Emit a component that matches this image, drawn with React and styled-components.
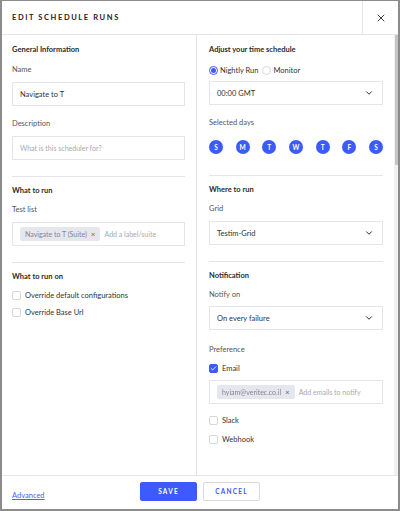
import React from "react";
import styled, { createGlobalStyle } from "styled-components";
import { X, ChevronDown, Check } from "lucide-react";

const GlobalStyle = createGlobalStyle`
  html, body {
    margin: 0;
    padding: 0;
    background: #fff;
  }
  * {
    box-sizing: border-box;
  }
`;

const BLUE = "#3d5afe";
const LINE = "#e4e4ea";

const Modal = styled.div`
  width: 400px;
  height: 511px;
  display: flex;
  flex-direction: column;
  border: 2px solid #8c8c8c;
  border-top-width: 1px;
  background: #fff;
  font-family: Lato, "Open Sans", sans-serif;
  color: #333;
  overflow: hidden;
`;

const Header = styled.div`
  height: 34px;
  flex: none;
  display: flex;
  align-items: center;
  border-bottom: 1px solid ${LINE};
`;

const Title = styled.div`
  flex: 1;
  padding-left: 10px;
  font-size: 7.5px;
  font-weight: 700;
  letter-spacing: 1.6px;
  color: #222;
`;

const CloseButton = styled.div`
  width: 36px;
  height: 100%;
  display: flex;
  align-items: center;
  justify-content: center;
  border-left: 1px solid ${LINE};
  color: #222;
`;

const Body = styled.div`
  flex: 1;
  display: flex;
  min-height: 0;
`;

const Columns = styled.div`
  flex: 1;
  display: grid;
  grid-template-columns: 195px 1fr;
`;

const Column = styled.div`
  padding: 0 11px 0 ${(p) => p.$left}px;
  border-right: ${(p) => (p.$divider ? `1px solid ${LINE}` : "none")};
`;

const ScrollTrack = styled.div`
  width: 4px;
  flex: none;
  background: #f1f1f1;
`;

const ScrollThumb = styled.div`
  width: 3px;
  height: 130px;
  margin-left: 1px;
  background: #c4c4c4;
`;

const Section = styled.div`
  padding: ${(p) => p.$top ?? 9}px 0 ${(p) => p.$bottom ?? 16}px;
  border-bottom: ${(p) => (p.$last ? "none" : `1px solid ${LINE}`)};
`;

const SectionTitle = styled.div`
  font-size: 7.5px;
  line-height: 12px;
  font-weight: 700;
  color: #2b2b2b;
`;

const Label = styled.div`
  font-size: 7.5px;
  line-height: 12px;
  color: #555;
  margin-top: ${(p) => p.$mt ?? 8}px;
`;

const Input = styled.div`
  margin-top: ${(p) => p.$mt ?? 6}px;
  height: 24px;
  border: 1px solid ${LINE};
  display: flex;
  align-items: center;
  gap: 4px;
  padding: 0 7px;
  font-size: 7.5px;
  color: #333;
`;

const Select = styled(Input)`
  justify-content: space-between;
  padding-right: 8px;
`;

const Placeholder = styled.span`
  color: #a8a8b0;
  font-size: 7px;
`;

const Chip = styled.span`
  height: 14px;
  display: inline-flex;
  align-items: center;
  gap: 4px;
  padding: 0 5px;
  border-radius: 2px;
  background: #e6e6ef;
  color: #858590;
  font-size: 7px;
`;

const ChipText = styled.span`
  filter: ${(p) => (p.$blur ? "blur(0.5px)" : "none")};
`;

const ChipClose = styled.span`
  font-size: 8px;
  color: #666;
`;

const CheckRow = styled.label`
  display: flex;
  align-items: center;
  gap: 4px;
  height: 12px;
  margin-top: ${(p) => p.$mt ?? 5}px;
  font-size: 7.5px;
  color: #333;
`;

const Box = styled.span`
  width: 9px;
  height: 9px;
  border-radius: 2px;
  border: 1px solid ${(p) => (p.$checked ? BLUE : "#d6d6dc")};
  background: ${(p) => (p.$checked ? BLUE : "#fff")};
  display: flex;
  align-items: center;
  justify-content: center;
  color: #fff;
`;

const RadioRow = styled.div`
  display: flex;
  align-items: center;
  height: 12px;
  margin-top: 8px;
  font-size: 7.5px;
  color: #333;
`;

const RadioOption = styled.span`
  display: flex;
  align-items: center;
  gap: 2px;
  margin-right: 4px;
`;

const RadioDot = styled.span`
  width: 9px;
  height: 9px;
  border-radius: 50%;
  border: 1px solid ${(p) => (p.$checked ? BLUE : "#d6d6dc")};
  display: flex;
  align-items: center;
  justify-content: center;

  &::after {
    content: "";
    width: 5px;
    height: 5px;
    border-radius: 50%;
    background: ${(p) => (p.$checked ? BLUE : "transparent")};
  }
`;

const Days = styled.div`
  display: flex;
  justify-content: space-between;
  margin-top: 11px;
`;

const Day = styled.span`
  width: 14px;
  height: 14px;
  border-radius: 50%;
  background: ${BLUE};
  color: #fff;
  font-size: 6.5px;
  font-weight: 700;
  display: flex;
  align-items: center;
  justify-content: center;
`;

const Footer = styled.div`
  height: 34px;
  flex: none;
  border-top: 1px solid ${LINE};
  display: grid;
  grid-template-columns: 1fr auto 1fr;
  align-items: center;
  padding: 0 10px 2px;
`;

const AdvancedLink = styled.a`
  font-size: 7.5px;
  color: #4a63f0;
  text-decoration: underline;
`;

const Buttons = styled.div`
  display: flex;
  gap: 6px;
`;

const Button = styled.button`
  width: 57px;
  height: 19px;
  border-radius: 2px;
  font-family: Lato, sans-serif;
  font-size: 6.5px;
  font-weight: 700;
  letter-spacing: 1.2px;
  cursor: pointer;
  border: 1px solid ${(p) => (p.$primary ? BLUE : "#d9d9de")};
  background: ${(p) => (p.$primary ? BLUE : "#fff")};
  color: ${(p) => (p.$primary ? "#fff" : BLUE)};
`;

const days = ["S", "M", "T", "W", "T", "F", "S"];

export default function App() {
  return (
    <Modal>
      <GlobalStyle />
      <Header>
        <Title>EDIT SCHEDULE RUNS</Title>
        <CloseButton>
          <X size={12} strokeWidth={1.8} />
        </CloseButton>
      </Header>

      <Body>
        <Columns>
          <Column $left={10} $divider>
            <Section>
              <SectionTitle>General Information</SectionTitle>
              <Label>Name</Label>
              <Input>Navigate to T</Input>
              <Label $mt={12}>Description</Label>
              <Input>
                <Placeholder>What is this scheduler for?</Placeholder>
              </Input>
            </Section>
            <Section $top={8}>
              <SectionTitle>What to run</SectionTitle>
              <Label $mt={7}>Test list</Label>
              <Input>
                <Chip>
                  <ChipText>Navigate to T (Suite)</ChipText>
                  <ChipClose>×</ChipClose>
                </Chip>
                <Placeholder>Add a label/suite</Placeholder>
              </Input>
            </Section>
            <Section $top={8} $last>
              <SectionTitle>What to run on</SectionTitle>
              <CheckRow $mt={6}>
                <Box />
                Override default configurations
              </CheckRow>
              <CheckRow>
                <Box />
                Override Base Url
              </CheckRow>
            </Section>
          </Column>

          <Column $left={12}>
            <Section $bottom={21}>
              <SectionTitle>Adjust your time schedule</SectionTitle>
              <RadioRow>
                <RadioOption>
                  <RadioDot $checked />
                  Nightly Run
                </RadioOption>
                <RadioOption>
                  <RadioDot />
                  Monitor
                </RadioOption>
              </RadioRow>
              <Select $mt={5}>
                00:00 GMT
                <ChevronDown size={10} strokeWidth={2.4} />
              </Select>
              <Label $mt={12}>Selected days</Label>
              <Days>
                {days.map((d, i) => (
                  <Day key={i}>{d}</Day>
                ))}
              </Days>
            </Section>
            <Section $top={8}>
              <SectionTitle>Where to run</SectionTitle>
              <Label $mt={7}>Grid</Label>
              <Select>
                Testim-Grid
                <ChevronDown size={10} strokeWidth={2.4} />
              </Select>
            </Section>
            <Section $top={8} $last>
              <SectionTitle>Notification</SectionTitle>
              <Label $mt={7}>Notify on</Label>
              <Select $mt={5}>
                On every failure
                <ChevronDown size={10} strokeWidth={2.4} />
              </Select>
              <Label $mt={14}>Preference</Label>
              <CheckRow $mt={6}>
                <Box $checked>
                  <Check size={7} strokeWidth={3} />
                </Box>
                Email
              </CheckRow>
              <Input $mt={6}>
                <Chip>
                  <ChipText $blur>hyiam@veritec.co.il</ChipText>
                  <ChipClose>×</ChipClose>
                </Chip>
                <Placeholder>Add emails to notify</Placeholder>
              </Input>
              <CheckRow $mt={10}>
                <Box />
                Slack
              </CheckRow>
              <CheckRow $mt={7}>
                <Box />
                Webhook
              </CheckRow>
            </Section>
          </Column>
        </Columns>
        <ScrollTrack>
          <ScrollThumb />
        </ScrollTrack>
      </Body>

      <Footer>
        <div>
          <AdvancedLink href="#">Advanced</AdvancedLink>
        </div>
        <Buttons>
          <Button $primary>SAVE</Button>
          <Button>CANCEL</Button>
        </Buttons>
        <div />
      </Footer>
    </Modal>
  );
}
